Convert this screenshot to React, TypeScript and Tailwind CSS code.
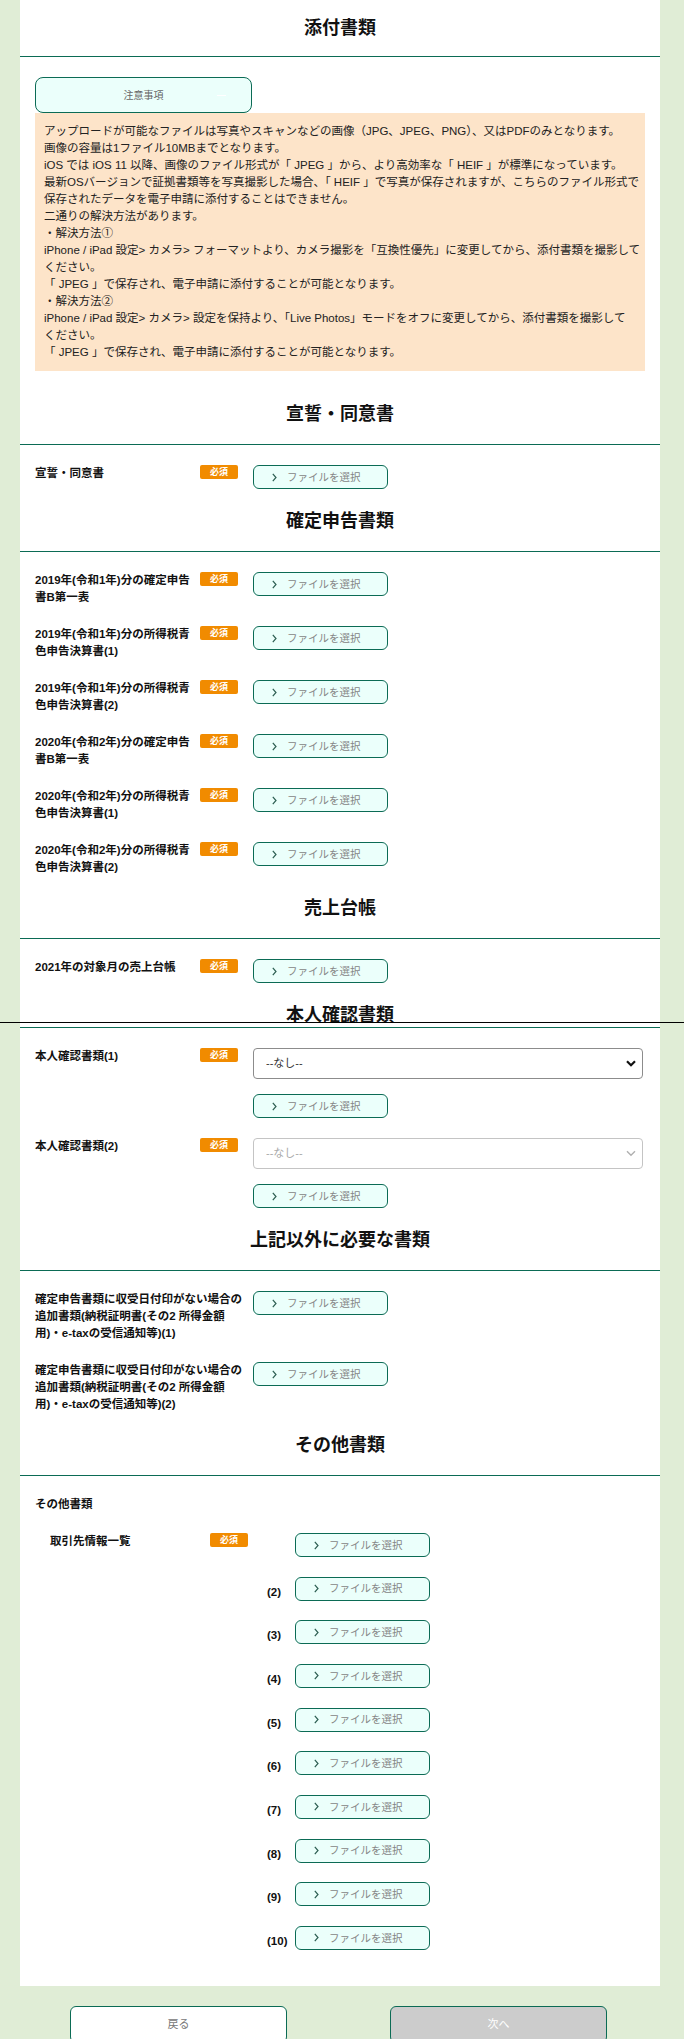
import React from 'react';

const rule = 'border-b border-[#0b6b55]';

const notes = [
  'アップロードが可能なファイルは写真やスキャンなどの画像（JPG、JPEG、PNG）、又はPDFのみとなります。',
  '画像の容量は1ファイル10MBまでとなります。',
  'iOS では iOS 11 以降、画像のファイル形式が「 JPEG 」から、より高効率な「 HEIF 」が標準になっています。',
  '最新OSバージョンで証拠書類等を写真撮影した場合、「 HEIF 」で写真が保存されますが、こちらのファイル形式で',
  '保存されたデータを電子申請に添付することはできません。',
  '二通りの解決方法があります。',
  '・解決方法①',
  'iPhone / iPad 設定> カメラ> フォーマットより、カメラ撮影を「互換性優先」に変更してから、添付書類を撮影して',
  'ください。',
  '「 JPEG 」で保存され、電子申請に添付することが可能となります。',
  '・解決方法②',
  'iPhone / iPad 設定> カメラ> 設定を保持より、「Live Photos」モードをオフに変更してから、添付書類を撮影して',
  'ください。',
  '「 JPEG 」で保存され、電子申請に添付することが可能となります。',
];

const taxDocs = [
  ['2019年(令和1年)分の確定申告', '書B第一表'],
  ['2019年(令和1年)分の所得税青', '色申告決算書(1)'],
  ['2019年(令和1年)分の所得税青', '色申告決算書(2)'],
  ['2020年(令和2年)分の確定申告', '書B第一表'],
  ['2020年(令和2年)分の所得税青', '色申告決算書(1)'],
  ['2020年(令和2年)分の所得税青', '色申告決算書(2)'],
];

function Chevron() {
  return (
    <svg width="5" height="9" viewBox="0 0 5 9" fill="none" className="shrink-0">
      <path d="M0.8 0.8 L4 4.5 L0.8 8.2" stroke="#2d5e52" strokeWidth="1.2" />
    </svg>
  );
}

function FileButton() {
  return (
    <button
      type="button"
      className="flex h-[24px] w-[135px] shrink-0 items-center rounded-[6px] border border-[#0b6b55] bg-[#ebfffb] pl-[18px] text-[10.5px] leading-none text-[#858585]"
    >
      <Chevron />
      <span className="ml-[10px]">ファイルを選択</span>
    </button>
  );
}

function Required() {
  return (
    <span className="flex h-[14px] w-[38px] items-center justify-center rounded-[2px] bg-[#f18b00] text-[9px] font-bold leading-none text-white">
      必須
    </span>
  );
}

function Heading({ title }: { title: string }) {
  return (
    <h2 className={`flex h-[63px] items-center justify-center pt-[2px] text-[18px] font-bold text-[#111] ${rule}`}>
      {title}
    </h2>
  );
}

function Label({ lines, className = '' }: { lines: string[]; className?: string }) {
  return (
    <div className={`${className} shrink-0 text-[11.5px] font-bold leading-[17px] text-[#111]`}>
      {lines.map((l) => (
        <div key={l} className="whitespace-nowrap">
          {l}
        </div>
      ))}
    </div>
  );
}

function DocRow({ lines, required = true, children }: { lines: string[]; required?: boolean; children?: React.ReactNode }) {
  return (
    <div className="flex items-start">
      <Label lines={lines} className={required ? 'w-[165px]' : 'w-[218px]'} />
      {required && (
        <div className="w-[53px] shrink-0">
          <Required />
        </div>
      )}
      {children ?? <FileButton />}
    </div>
  );
}

function Section({ title, heading, children }: { title: string; heading?: React.ReactNode; children: React.ReactNode }) {
  return (
    <section>
      {heading ?? <Heading title={title} />}
      <div className="flex flex-col gap-[20px] px-[15px] pt-[20px]">{children}</div>
    </section>
  );
}

function SelectBox({ disabled = false }: { disabled?: boolean }) {
  return (
    <div className="relative h-[31px] w-[390px]">
      <select
        disabled={disabled}
        className={`h-full w-full appearance-none rounded-[4px] border bg-white pl-[12px] text-[11px] ${
          disabled ? 'border-[#c4c4c4] text-[#aaaaaa]' : 'border-[#8c8c8c] text-[#333]'
        }`}
      >
        <option>--なし--</option>
      </select>
      <svg className="pointer-events-none absolute right-[7px] top-[12px]" width="10" height="7" viewBox="0 0 10 7">
        <path
          d="M1 1.2 L5 5.2 L9 1.2"
          fill="none"
          stroke={disabled ? '#b0b0b0' : '#111'}
          strokeWidth={disabled ? 1.4 : 2.2}
        />
      </svg>
    </div>
  );
}

export default function App() {
  return (
    <div className="relative min-h-[2039px] w-full bg-[#e0edd6] pb-[10px] font-['Liberation_Sans','Noto_Sans_CJK_JP',sans-serif]">
      <main className="ml-[20px] w-[640px] bg-white pb-[36px]">
        <h1 className={`flex h-[57px] items-center justify-center text-[18px] font-bold text-[#111] ${rule}`}>添付書類</h1>

        <div className="px-[15px] pt-[20px] pb-[11px]">
          <button
            type="button"
            className="relative flex h-[36px] w-[217px] items-center justify-center rounded-[8px] border border-[#0b6b55] bg-[#ebfffb] text-[10px] text-[#666]"
          >
            注意事項
            <span className="absolute right-[25px] top-1/2 h-px w-[9px] bg-white" />
          </button>
          <div className="bg-[#fde4c9] px-[9px] py-[10px] text-[11.5px] leading-[17px] text-[#222]">
            {notes.map((n, i) => (
              <div key={i} className="whitespace-nowrap">
                {n}
              </div>
            ))}
          </div>
        </div>

        <Section title="宣誓・同意書">
          <DocRow lines={['宣誓・同意書']} />
        </Section>

        <Section title="確定申告書類">
          {taxDocs.map((d, i) => (
            <DocRow key={i} lines={d} />
          ))}
        </Section>

        <Section title="売上台帳">
          <DocRow lines={['2021年の対象月の売上台帳']} />
        </Section>

        <Section
          title="本人確認書類"
          heading={
            <h2 className={`flex h-[45px] justify-center pt-[20px] text-[18px] font-bold leading-[24px] text-[#111] ${rule}`}>
              本人確認書類
            </h2>
          }
        >
          <DocRow lines={['本人確認書類(1)']}>
            <div className="flex flex-col gap-[15px]">
              <SelectBox />
              <FileButton />
            </div>
          </DocRow>
          <DocRow lines={['本人確認書類(2)']}>
            <div className="flex flex-col gap-[15px]">
              <SelectBox disabled />
              <FileButton />
            </div>
          </DocRow>
        </Section>

        <Section title="上記以外に必要な書類">
          <DocRow required={false} lines={['確定申告書類に収受日付印がない場合の', '追加書類(納税証明書(その2 所得金額', '用)・e-taxの受信通知等)(1)']} />
          <DocRow required={false} lines={['確定申告書類に収受日付印がない場合の', '追加書類(納税証明書(その2 所得金額', '用)・e-taxの受信通知等)(2)']} />
        </Section>

        <Section title="その他書類">
          <Label lines={['その他書類']} />
          <div className="flex flex-col gap-[19.67px] pl-[15px]">
            <div className="flex items-start">
              <Label lines={['取引先情報一覧']} className="w-[160px]" />
              <div className="w-[85px] shrink-0">
                <Required />
              </div>
              <FileButton />
            </div>
            {[2, 3, 4, 5, 6, 7, 8, 9, 10].map((n) => (
              <div key={n} className="flex items-end pl-[217px]">
                <span className="w-[28px] shrink-0 text-[11.5px] font-bold leading-[17px] text-[#111]">({n})</span>
                <FileButton />
              </div>
            ))}
          </div>
        </Section>
      </main>

      <div className="flex gap-[103px] pl-[70px] pt-[20px]">
        <button type="button" className="h-[37px] w-[217px] rounded-[6px] border border-[#0b6b55] bg-white text-[11px] text-[#777]">
          戻る
        </button>
        <button type="button" className="h-[37px] w-[217px] rounded-[6px] border border-[#0b6b55] bg-[#cccccc] text-[11px] text-white">
          次へ
        </button>
      </div>

      <div className="absolute left-0 top-[1022px] h-px w-full bg-black" />
    </div>
  );
}
